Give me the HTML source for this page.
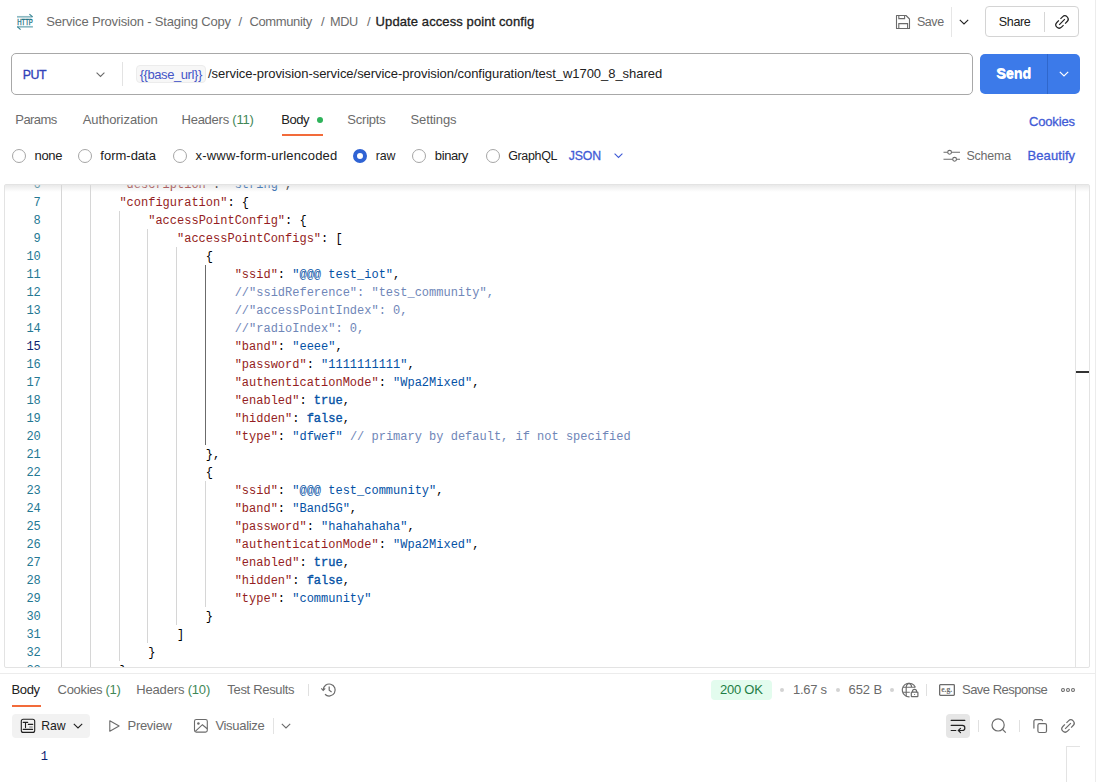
<!DOCTYPE html>
<html><head><meta charset="utf-8">
<style>
*{box-sizing:border-box;margin:0;padding:0}
html,body{width:1107px;height:782px;overflow:hidden;background:#fff;font-family:"Liberation Sans",sans-serif;color:#212121}
.a{position:absolute;white-space:nowrap}
.t{font-size:13px;line-height:16px}
.g{color:#6b6b6b}
.grn{color:#3f8757}
svg{position:absolute;overflow:visible}
#ed{position:absolute;left:4px;top:184px;width:1086px;height:484px;border:1px solid #e3e3e3;border-bottom:1px solid #e3e3e3;border-radius:2px;overflow:hidden}
#code{position:absolute;left:56.8px;top:9px;font-family:"Liberation Mono",monospace;font-size:12px;color:#000}
.ln{position:absolute;left:0;height:18px;line-height:18px;white-space:pre}
.ln u{position:absolute;left:-56.8px;width:35.8px;text-align:right;text-decoration:none;color:#237893}
.ln u.cur{color:#0b216f}
i{font-style:normal}
.k{color:#941d22}
.s{color:#0451a5}
.c{color:#6f86b8}
.b{color:#0451a5;-webkit-text-stroke:0.35px #0451a5}
.gd{position:absolute;width:1px;background:#d6d6d6}
</style></head><body>
<!-- right border line -->
<div class="a" style="left:1095px;top:0;width:1px;height:782px;background:#ececec"></div>

<!-- HTTP icon -->
<svg style="left:16px;top:13px" width="18" height="18" viewBox="0 0 18 18">
 <path d="M1 3.8H16.4" stroke="#8dbac3" stroke-width="1.7" fill="none"/>
 <path d="M13.4 1.2L16.6 3.9" stroke="#2f7f8e" stroke-width="1.1" fill="none"/>
 <path d="M1.4 13.8H16.9" stroke="#8dbac3" stroke-width="1.7" fill="none"/>
 <path d="M1.2 13.7L4.6 16.6" stroke="#2f7f8e" stroke-width="1.1" fill="none"/>
 <text x="9" y="12.1" text-anchor="middle" font-family="Liberation Sans" font-size="8.4" fill="#1f7586" stroke="#1f7586" stroke-width="0.35" textLength="15.6" lengthAdjust="spacingAndGlyphs">HTTP</text>
</svg>

<!-- Save -->
<svg style="left:895px;top:14px" width="16" height="16" viewBox="0 0 16 16">
 <path d="M1.5 1.5H11L14.5 5V14.5H1.5Z" stroke="#6b6b6b" stroke-width="1.1" fill="none" stroke-linejoin="round"/>
 <path d="M3.8 1.5V4.6H9.6V1.5M3.8 14.5V9.6H12.6V14.5" stroke="#6b6b6b" stroke-width="1.1" fill="none"/>
</svg>
<div class="a" style="left:951px;top:7px;width:1px;height:30px;background:#e6e6e6"></div>
<svg style="left:959px;top:19px" width="10" height="6" viewBox="0 0 10 6"><path d="M0.8 0.8L5 5L9.2 0.8" stroke="#212121" stroke-width="1.1" fill="none"/></svg>
<div class="a" style="left:985px;top:6px;width:94px;height:31px;border:1px solid #d4d4d4;border-radius:4px"></div>
<div class="a" style="left:1044px;top:12px;width:1px;height:20px;background:#d6d6d6"></div>
<svg style="left:1055px;top:15px" width="14" height="14" viewBox="-7 -7 14 14"><g transform="rotate(-45)" fill="none" stroke="#212121" stroke-width="1.2"><path d="M1.1,-3.3H4A3.3,3.3 0 0 1 4,3.3H1.1M-1.1,-3.3H-4A3.3,3.3 0 0 0 -4,3.3H-1.1M-4,0H4"/></g></svg>

<!-- URL bar -->
<div class="a" style="left:11px;top:53px;width:962px;height:42px;border:1px solid #a8a8a8;border-radius:5px"></div>
<svg style="left:96px;top:72px" width="9" height="5" viewBox="0 0 9 5"><path d="M0.6 0.6L4.5 4.4L8.4 0.6" stroke="#6b6b6b" stroke-width="1.1" fill="none"/></svg>
<div class="a" style="left:122px;top:62px;width:1px;height:24px;background:#e3e3e3"></div>
<div class="a" style="left:136px;top:65px;width:70px;height:18px;background:#f7f7f7;border:1px solid #ececec;border-radius:4px"></div>
<div class="a" style="left:980px;top:54px;width:100px;height:40px;background:#3c7ae9;border-radius:5px"></div>
<div class="a" style="left:1047px;top:54px;width:1px;height:40px;background:#2f67cc"></div>
<div class="a" style="left:996px;top:65px;line-height:17px;font-size:14.5px;font-weight:bold;color:#fff">Send</div>
<svg style="left:1059px;top:71px" width="10" height="6" viewBox="0 0 10 6"><path d="M0.8 0.8L5 5L9.2 0.8" stroke="#fff" stroke-width="1.2" fill="none"/></svg>

<!-- tabs -->
<div class="a" style="left:317px;top:117px;width:6px;height:6px;border-radius:50%;background:#2fb35a"></div>
<div class="a" style="left:282px;top:134px;width:41px;height:2px;background:#f26b3a"></div>

<!-- body types -->
<div class="a" style="left:12px;top:149px;width:14px;height:14px;border:1px solid #a6a6a6;border-radius:50%"></div>
<div class="a" style="left:78px;top:149px;width:14px;height:14px;border:1px solid #a6a6a6;border-radius:50%"></div>
<div class="a" style="left:173px;top:149px;width:14px;height:14px;border:1px solid #a6a6a6;border-radius:50%"></div>
<div class="a" style="left:353px;top:149px;width:14px;height:14px;border:4px solid #2f63d4;border-radius:50%"></div>
<div class="a" style="left:412px;top:149px;width:14px;height:14px;border:1px solid #a6a6a6;border-radius:50%"></div>
<div class="a" style="left:486px;top:149px;width:14px;height:14px;border:1px solid #a6a6a6;border-radius:50%"></div>
<svg style="left:614px;top:153px" width="9" height="5" viewBox="0 0 9 5"><path d="M0.6 0.6L4.5 4.4L8.4 0.6" stroke="#3f5bd6" stroke-width="1.1" fill="none"/></svg>
<svg style="left:943px;top:149px" width="18" height="13" viewBox="0 0 18 13">
 <path d="M0.5 3.3H4.7M8.5 3.3H17M0.5 10.3H9.7M13.5 10.3H17" stroke="#6b6b6b" stroke-width="1.1" fill="none"/>
 <circle cx="6.6" cy="3.3" r="1.9" stroke="#6b6b6b" stroke-width="1.1" fill="none"/>
 <circle cx="11.6" cy="10.3" r="1.9" stroke="#6b6b6b" stroke-width="1.1" fill="none"/>
</svg>

<!-- editor -->
<div id="ed">
 <div style="position:absolute;left:0;top:0;width:100%;height:7px;z-index:5;background:linear-gradient(rgba(215,215,215,0.55),rgba(255,255,255,0))"></div>
 <div class="gd" style="left:56px;top:0;height:484px"></div>
 <div class="gd" style="left:85px;top:0;height:484px"></div>
 <div class="gd" style="left:114px;top:26px;height:450px"></div>
 <div class="gd" style="left:142px;top:44px;height:414px;"></div>
 <div class="gd" style="left:171px;top:62px;height:378px"></div>
 <div class="gd" style="left:200px;top:80px;height:180px;background:#6b6b6b"></div>
 <div class="gd" style="left:200px;top:296px;height:126px"></div>
 <div id="code">
<div class="ln" style="top:-18px"><u>6</u>        <i class="k">"description"</i>: <i class="s">"string"</i>,</div>
<div class="ln" style="top:0px"><u>7</u>        <i class="k">"configuration"</i>: {</div>
<div class="ln" style="top:18px"><u>8</u>            <i class="k">"accessPointConfig"</i>: {</div>
<div class="ln" style="top:36px"><u>9</u>                <i class="k">"accessPointConfigs"</i>: [</div>
<div class="ln" style="top:54px"><u>10</u>                    {</div>
<div class="ln" style="top:72px"><u>11</u>                        <i class="k">"ssid"</i>: <i class="s">"@@@ test_iot"</i>,</div>
<div class="ln" style="top:90px"><u>12</u>                        <i class="c">//"ssidReference": "test_community",</i></div>
<div class="ln" style="top:108px"><u>13</u>                        <i class="c">//"accessPointIndex": 0,</i></div>
<div class="ln" style="top:126px"><u>14</u>                        <i class="c">//"radioIndex": 0,</i></div>
<div class="ln" style="top:144px"><u class="cur">15</u>                        <i class="k">"band"</i>: <i class="s">"eeee"</i>,</div>
<div class="ln" style="top:162px"><u>16</u>                        <i class="k">"password"</i>: <i class="s">"1111111111"</i>,</div>
<div class="ln" style="top:180px"><u>17</u>                        <i class="k">"authenticationMode"</i>: <i class="s">"Wpa2Mixed"</i>,</div>
<div class="ln" style="top:198px"><u>18</u>                        <i class="k">"enabled"</i>: <i class="b">true</i>,</div>
<div class="ln" style="top:216px"><u>19</u>                        <i class="k">"hidden"</i>: <i class="b">false</i>,</div>
<div class="ln" style="top:234px"><u>20</u>                        <i class="k">"type"</i>: <i class="s">"dfwef"</i> <i class="c">// primary by default, if not specified</i></div>
<div class="ln" style="top:252px"><u>21</u>                    },</div>
<div class="ln" style="top:270px"><u>22</u>                    {</div>
<div class="ln" style="top:288px"><u>23</u>                        <i class="k">"ssid"</i>: <i class="s">"@@@ test_community"</i>,</div>
<div class="ln" style="top:306px"><u>24</u>                        <i class="k">"band"</i>: <i class="s">"Band5G"</i>,</div>
<div class="ln" style="top:324px"><u>25</u>                        <i class="k">"password"</i>: <i class="s">"hahahahaha"</i>,</div>
<div class="ln" style="top:342px"><u>26</u>                        <i class="k">"authenticationMode"</i>: <i class="s">"Wpa2Mixed"</i>,</div>
<div class="ln" style="top:360px"><u>27</u>                        <i class="k">"enabled"</i>: <i class="b">true</i>,</div>
<div class="ln" style="top:378px"><u>28</u>                        <i class="k">"hidden"</i>: <i class="b">false</i>,</div>
<div class="ln" style="top:396px"><u>29</u>                        <i class="k">"type"</i>: <i class="s">"community"</i></div>
<div class="ln" style="top:414px"><u>30</u>                    }</div>
<div class="ln" style="top:432px"><u>31</u>                ]</div>
<div class="ln" style="top:450px"><u>32</u>            }</div>
<div class="ln" style="top:468px"><u>33</u>        }</div> </div>
 <div class="a" style="left:1070px;top:0;width:1px;height:484px;background:#e3e3e3"></div>
 <div class="a" style="left:1071px;top:186px;width:14px;height:2px;background:#333"></div>
</div>

<!-- response -->
<div class="a" style="left:0;top:673px;width:1095px;height:1px;background:#ececec"></div>
<div class="a" style="left:12px;top:705px;width:29px;height:2px;background:#f26b3a"></div>
<div class="a" style="left:308px;top:684px;width:1px;height:12px;background:#e0e0e0"></div>
<svg style="left:321px;top:683px" width="16" height="14" viewBox="0 0 16 14">
 <path d="M2.2 7A6 6 0 1 1 4 11.3" stroke="#6b6b6b" stroke-width="1.2" fill="none"/>
 <path d="M0.3 5.3L2.2 7.3L4.2 5.3" stroke="#6b6b6b" stroke-width="1.2" fill="none"/>
 <path d="M8.2 3.6V7.3L10.6 9" stroke="#6b6b6b" stroke-width="1.2" fill="none"/>
</svg>

<div class="a" style="left:711px;top:680px;width:61px;height:20px;background:#e3fcee;border-radius:4px"></div>
<div class="a" style="left:780px;top:688px;width:4px;height:4px;border-radius:50%;background:#d3d3d3"></div>
<div class="a" style="left:836px;top:688px;width:4px;height:4px;border-radius:50%;background:#d3d3d3"></div>
<div class="a" style="left:890px;top:688px;width:4px;height:4px;border-radius:50%;background:#d3d3d3"></div>
<svg style="left:898px;top:679px" width="24" height="22" viewBox="0 0 24 22">
 <path d="M17.3 8.2A6.8 6.8 0 1 0 11.6 17.8" stroke="#6b6b6b" stroke-width="1.15" fill="none"/>
 <path d="M8.2 17.6V8.6C8.2 6.2 9.4 4.7 11 4.4C12.6 4.7 13.6 6.2 13.6 8.2M4.8 8.2H17.4M4.8 13.2H11.8" stroke="#6b6b6b" stroke-width="1.15" fill="none"/>
 <rect x="13.3" y="13.2" width="6.6" height="4.5" rx="0.6" stroke="#6b6b6b" stroke-width="1.2" fill="#fff"/>
 <path d="M14.5 13.2V12.4A2.05 2.05 0 0 1 18.6 12.4V13.2" stroke="#6b6b6b" stroke-width="1.15" fill="none"/>
 <circle cx="16.6" cy="15.5" r="0.6" fill="#6b6b6b"/>
</svg>
<div class="a" style="left:926px;top:684px;width:1px;height:12px;background:#e0e0e0"></div>
<svg style="left:939px;top:684px" width="16" height="12" viewBox="0 0 16 12">
 <rect x="0.65" y="0.65" width="14.7" height="10.7" rx="0.8" stroke="#6b6b6b" stroke-width="1.3" fill="none"/>
 <text x="2.2" y="7.6" font-family="Liberation Serif" font-weight="bold" font-size="7.6" fill="#6b6b6b" textLength="11" lengthAdjust="spacingAndGlyphs">e.g.</text>
</svg>

<svg style="left:1061px;top:687px" width="15" height="6" viewBox="0 0 15 6">
 <circle cx="2" cy="3" r="1.45" stroke="#6b6b6b" stroke-width="1.1" fill="none"/>
 <circle cx="7" cy="3" r="1.45" stroke="#6b6b6b" stroke-width="1.1" fill="none"/>
 <circle cx="12" cy="3" r="1.45" stroke="#6b6b6b" stroke-width="1.1" fill="none"/>
</svg>

<!-- response toolbar -->
<div class="a" style="left:12px;top:714px;width:78px;height:24px;background:#f2f2f2;border-radius:4px"></div>
<svg style="left:20px;top:718px" width="16" height="16" viewBox="0 0 16 16">
 <rect x="1.3" y="1.3" width="13.4" height="13.1" rx="2" stroke="#212121" stroke-width="1.1" fill="none"/>
 <path d="M3.2 4.4H7.7M5.5 4.4V9.6M8.3 6.4H12.7M3.2 11.4H12.6" stroke="#212121" stroke-width="1.1" fill="none" stroke-linecap="round"/>
 <path d="M9.2 9H12.7" stroke="#808080" stroke-width="1.1" fill="none"/>
</svg>
<svg style="left:73px;top:723px" width="10" height="6" viewBox="0 0 10 6"><path d="M0.8 0.8L5 5L9.2 0.8" stroke="#212121" stroke-width="1.1" fill="none"/></svg>
<svg style="left:108px;top:720px" width="12" height="12" viewBox="0 0 12 12"><path d="M1.8 0.8L11.1 6L1.8 11.2Z" stroke="#6b6b6b" stroke-width="1.1" fill="none" stroke-linejoin="round"/></svg>
<svg style="left:193px;top:718px" width="16" height="16" viewBox="0 0 16 16">
 <rect x="1.5" y="1.5" width="12.8" height="12.6" rx="1.8" stroke="#6b6b6b" stroke-width="1.1" fill="none"/>
 <circle cx="5.4" cy="5.5" r="1.25" fill="#6b6b6b"/>
 <path d="M2.3 13.3L9.4 6.7L14.2 10.8" stroke="#6b6b6b" stroke-width="1.15" fill="none"/>
</svg>
<div class="a" style="left:273px;top:718px;width:1px;height:16px;background:#e3e3e3"></div>
<svg style="left:281px;top:723px" width="10" height="6" viewBox="0 0 10 6"><path d="M0.8 0.8L5 5L9.2 0.8" stroke="#6b6b6b" stroke-width="1.1" fill="none"/></svg>

<div class="a" style="left:946px;top:714px;width:24px;height:24px;background:#e6e6e6;border-radius:4px"></div>
<svg style="left:950px;top:718px" width="16" height="16" viewBox="0 0 16 16">
 <path d="M1.2 2.4H14.8M1.2 7.4H12.3A2.55 2.55 0 0 1 12.3 12.5H8.6M1.2 12.5H5.8M10.5 10.3L8.3 12.5L10.5 14.7" stroke="#212121" stroke-width="1.2" fill="none" stroke-linecap="round"/>
</svg>
<div class="a" style="left:978px;top:720px;width:1px;height:12px;background:#e0e0e0"></div>
<svg style="left:990px;top:718px" width="17" height="16" viewBox="0 0 17 16">
 <circle cx="8.1" cy="6.9" r="6.1" stroke="#6b6b6b" stroke-width="1.2" fill="none"/>
 <path d="M12.4 11.3L15.8 14.6" stroke="#6b6b6b" stroke-width="1.2" fill="none"/>
</svg>
<div class="a" style="left:1019px;top:720px;width:1px;height:12px;background:#e0e0e0"></div>
<svg style="left:1032px;top:718px" width="16" height="16" viewBox="0 0 16 16">
 <path d="M1.9 10.1V3.2A1.6 1.6 0 0 1 3.5 1.6H9.2A1.1 1.1 0 0 1 10.4 2.6" stroke="#6b6b6b" stroke-width="1.2" fill="none" stroke-linecap="round"/>
 <rect x="5.9" y="5.7" width="8.6" height="8.8" rx="1.5" stroke="#6b6b6b" stroke-width="1.2" fill="none"/>
</svg>
<svg style="left:1061px;top:719px" width="14" height="14" viewBox="-7 -7 14 14"><g transform="rotate(-45)" fill="none" stroke="#6b6b6b" stroke-width="1.2"><path d="M1.1,-3.3H4A3.3,3.3 0 0 1 4,3.3H1.1M-1.1,-3.3H-4A3.3,3.3 0 0 0 -4,3.3H-1.1M-4.1,0H4.1"/></g></svg>

<div class="a" style="left:34px;top:748px;width:14px;line-height:18px;font-family:'Liberation Mono',monospace;font-size:12px;color:#0b216f;text-align:right">1</div>
<div class="a" style="left:1066px;top:746px;width:14px;height:40px;border-left:1px solid #e3e3e3;border-top:1px solid #e3e3e3"></div>
<div class="a" id="bc1" style="left:46.30px;top:14.00px;font-size:13px;line-height:16px;font-weight:400;color:#6b6b6b;letter-spacing:-0.172px;">Service Provision - Staging Copy</div>
<div class="a" id="bc2" style="left:238.50px;top:14.00px;font-size:13px;line-height:16px;font-weight:400;color:#6b6b6b;letter-spacing:0.000px;">/</div>
<div class="a" id="bc3" style="left:249.40px;top:14.00px;font-size:13px;line-height:16px;font-weight:400;color:#6b6b6b;letter-spacing:-0.367px;">Community</div>
<div class="a" id="bc4" style="left:321.00px;top:14.00px;font-size:13px;line-height:16px;font-weight:400;color:#6b6b6b;letter-spacing:0.000px;">/</div>
<div class="a" id="bc5" style="left:330.00px;top:14.00px;font-size:12.72px;line-height:16px;font-weight:400;color:#6b6b6b;letter-spacing:-0.390px;">MDU</div>
<div class="a" id="bc6" style="left:367.00px;top:14.00px;font-size:13px;line-height:16px;font-weight:400;color:#6b6b6b;letter-spacing:0.000px;">/</div>
<div class="a" id="bc7" style="left:375.60px;top:14.00px;font-size:13px;line-height:16px;font-weight:400;color:#212121;letter-spacing:0.101px;-webkit-text-stroke:0.3px currentColor;">Update access point config</div>
<div class="a" id="save" style="left:916.90px;top:14.00px;font-size:12.47px;line-height:16px;font-weight:400;color:#6b6b6b;letter-spacing:-0.395px;">Save</div>
<div class="a" id="share" style="left:998.80px;top:14.00px;font-size:12.52px;line-height:16px;font-weight:400;color:#212121;letter-spacing:-0.359px;">Share</div>
<div class="a" id="put" style="left:22.70px;top:67.00px;font-size:12.35px;line-height:16px;font-weight:400;color:#3040b8;letter-spacing:-0.474px;-webkit-text-stroke:0.3px currentColor;">PUT</div>
<div class="a" id="var" style="left:139.70px;top:67.00px;font-size:13px;line-height:16px;font-weight:400;color:#4455c8;letter-spacing:-0.427px;">{{base_url}}</div>
<div class="a" id="url" style="left:208.00px;top:66.00px;font-size:13px;line-height:16px;font-weight:400;color:#212121;letter-spacing:-0.042px;">/service-provision-service/service-provision/configuration/test_w1700_8_shared</div>
<div class="a" id="send" style="left:996.90px;top:66.00px;font-size:14px;line-height:16px;font-weight:700;color:#ffffff;letter-spacing:-0.025px;">Send</div>
<div class="a" id="tp" style="left:15.30px;top:112.00px;font-size:13px;line-height:16px;font-weight:400;color:#6b6b6b;letter-spacing:-0.558px;">Params</div>
<div class="a" id="ta" style="left:82.70px;top:112.00px;font-size:13px;line-height:16px;font-weight:400;color:#6b6b6b;letter-spacing:-0.062px;">Authorization</div>
<div class="a" id="th" style="left:181.50px;top:112.00px;font-size:13px;line-height:16px;font-weight:400;color:#6b6b6b;letter-spacing:-0.243px;">Headers <span class="grn">(11)</span></div>
<div class="a" id="tb" style="left:281.30px;top:112.00px;font-size:13px;line-height:16px;font-weight:400;color:#212121;letter-spacing:-0.444px;">Body</div>
<div class="a" id="ts" style="left:347.30px;top:112.00px;font-size:13px;line-height:16px;font-weight:400;color:#6b6b6b;letter-spacing:-0.222px;">Scripts</div>
<div class="a" id="tt" style="left:410.60px;top:112.00px;font-size:13px;line-height:16px;font-weight:400;color:#6b6b6b;letter-spacing:-0.153px;">Settings</div>
<div class="a" id="ck" style="left:1029.00px;top:114.00px;font-size:13px;line-height:16px;font-weight:400;color:#3f5bd6;letter-spacing:-0.161px;-webkit-text-stroke:0.3px currentColor;">Cookies</div>
<div class="a" id="r1" style="left:34.60px;top:148.00px;font-size:13px;line-height:16px;font-weight:400;color:#212121;letter-spacing:-0.363px;">none</div>
<div class="a" id="r2" style="left:100.30px;top:148.00px;font-size:13px;line-height:16px;font-weight:400;color:#212121;letter-spacing:-0.000px;">form-data</div>
<div class="a" id="r3" style="left:195.60px;top:148.00px;font-size:13px;line-height:16px;font-weight:400;color:#212121;letter-spacing:0.183px;">x-www-form-urlencoded</div>
<div class="a" id="r4" style="left:375.70px;top:148.00px;font-size:12.36px;line-height:16px;font-weight:400;color:#212121;letter-spacing:-0.045px;">raw</div>
<div class="a" id="r5" style="left:434.80px;top:148.00px;font-size:13px;line-height:16px;font-weight:400;color:#212121;letter-spacing:-0.381px;">binary</div>
<div class="a" id="r6" style="left:508.20px;top:148.00px;font-size:12.48px;line-height:16px;font-weight:400;color:#212121;letter-spacing:-0.342px;">GraphQL</div>
<div class="a" id="json" style="left:568.80px;top:148.00px;font-size:12.29px;line-height:16px;font-weight:400;color:#3f5bd6;letter-spacing:-0.128px;-webkit-text-stroke:0.3px currentColor;">JSON</div>
<div class="a" id="sch" style="left:966.40px;top:148.00px;font-size:12.42px;line-height:16px;font-weight:400;color:#6b6b6b;letter-spacing:-0.162px;">Schema</div>
<div class="a" id="bt" style="left:1027.50px;top:148.00px;font-size:13px;line-height:16px;font-weight:400;color:#3f5bd6;letter-spacing:0.090px;-webkit-text-stroke:0.3px currentColor;">Beautify</div>
<div class="a" id="rb" style="left:11.50px;top:682.00px;font-size:13px;line-height:16px;font-weight:400;color:#212121;letter-spacing:-0.344px;">Body</div>
<div class="a" id="rc" style="left:57.60px;top:682.00px;font-size:13px;line-height:16px;font-weight:400;color:#6b6b6b;letter-spacing:-0.324px;">Cookies <span class="grn">(1)</span></div>
<div class="a" id="rh" style="left:136.30px;top:682.00px;font-size:13px;line-height:16px;font-weight:400;color:#6b6b6b;letter-spacing:-0.176px;">Headers <span class="grn">(10)</span></div>
<div class="a" id="rt" style="left:227.30px;top:682.00px;font-size:13px;line-height:16px;font-weight:400;color:#6b6b6b;letter-spacing:-0.318px;">Test Results</div>
<div class="a" id="ok" style="left:719.90px;top:682.00px;font-size:13px;line-height:16px;font-weight:400;color:#1e7d45;letter-spacing:-0.223px;">200 OK</div>
<div class="a" id="tm" style="left:793.00px;top:682.00px;font-size:13px;line-height:16px;font-weight:400;color:#6b6b6b;letter-spacing:-0.303px;">1.67 s</div>
<div class="a" id="sz" style="left:848.50px;top:682.00px;font-size:13px;line-height:16px;font-weight:400;color:#6b6b6b;letter-spacing:-0.050px;">652 B</div>
<div class="a" id="sr" style="left:962.00px;top:682.00px;font-size:13px;line-height:16px;font-weight:400;color:#6b6b6b;letter-spacing:-0.513px;">Save Response</div>
<div class="a" id="raw" style="left:41.30px;top:718.00px;font-size:12.23px;line-height:16px;font-weight:400;color:#212121;letter-spacing:-0.060px;">Raw</div>
<div class="a" id="pv" style="left:127.50px;top:718.00px;font-size:13px;line-height:16px;font-weight:400;color:#6b6b6b;letter-spacing:-0.291px;">Preview</div>
<div class="a" id="vz" style="left:215.40px;top:718.00px;font-size:13px;line-height:16px;font-weight:400;color:#6b6b6b;letter-spacing:-0.308px;">Visualize</div>
</body></html>
